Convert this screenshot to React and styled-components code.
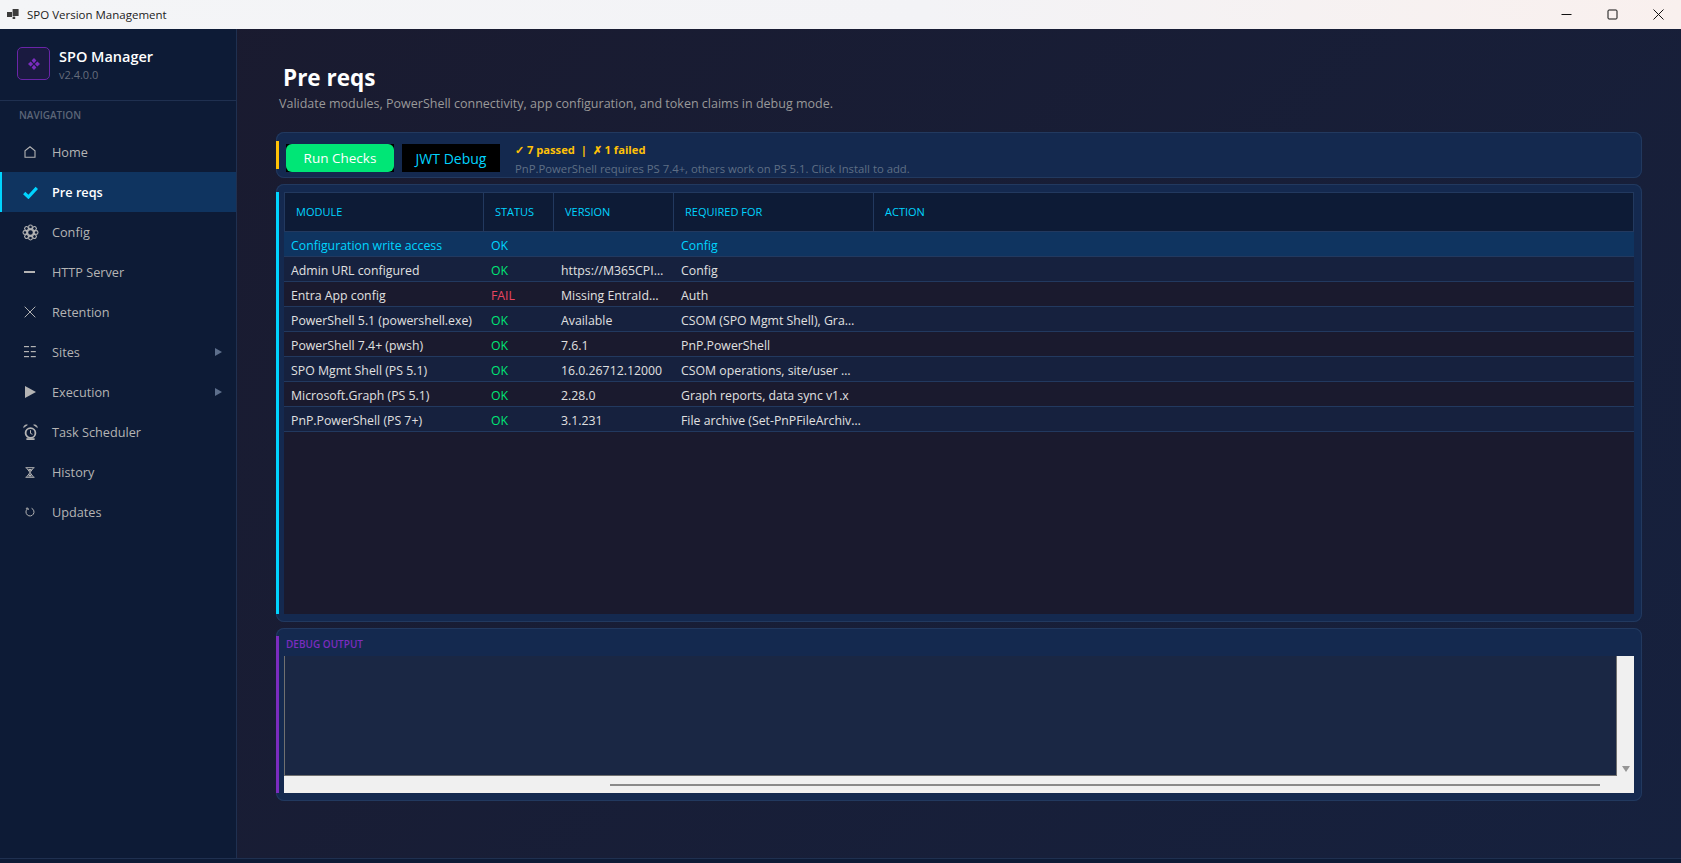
import React from 'react';
import styled, { createGlobalStyle } from 'styled-components';

const FONT = '"Open Sans", "Noto Sans", sans-serif';

const GlobalStyle = createGlobalStyle`
  html, body { margin: 0; padding: 0; height: 100%; overflow: hidden; }
  #root { height: 100%; }
  * { box-sizing: border-box; }
  body { font-family: ${FONT}; }
`;

const PETALS = [0, 45, 90, 135, 180, 225, 270, 315];

const Icons = {
  home: (
    <svg width="12" height="12" viewBox="0 0 12 12" fill="none" stroke="#b4b4b4" strokeWidth="1.1">
      <path d="M1 11.2V4.8L6 .8l5 4v6.4z" />
    </svg>
  ),
  check: (
    <svg width="15" height="13" viewBox="0 0 15 13" fill="none" stroke="#00d4ff" strokeWidth="3.2">
      <path d="M1.2 7l4.2 4L13.8 1.8" />
    </svg>
  ),
  gear: (
    <svg width="17" height="17" viewBox="0 0 17 17" fill="none" stroke="#b4b4b4" strokeWidth="1.1">
      {PETALS.map(a => (
        <circle key={a} cx="8.5" cy="2.9" r="1.9" transform={`rotate(${a} 8.5 8.5)`} />
      ))}
      <circle cx="8.5" cy="8.5" r="3" strokeWidth="1.4" />
    </svg>
  ),
  dash: (
    <svg width="12" height="4" viewBox="0 0 12 4" fill="#b4b4b4">
      <rect y="1" width="11" height="2" />
    </svg>
  ),
  cross: (
    <svg width="12" height="12" viewBox="0 0 12 12" stroke="#b4b4b4" strokeWidth="1">
      <path d="M.7.7l10.6 10.6M11.3.7L.7 11.3" />
    </svg>
  ),
  trigram: (
    <svg width="12" height="12" viewBox="0 0 12 12" fill="#b4b4b4">
      <rect y="0" width="5" height="1.2" />
      <rect x="6.8" y="0" width="5" height="1.2" />
      <rect y="5" width="5" height="1.2" />
      <rect x="6.8" y="5" width="5" height="1.2" />
      <rect y="10" width="5" height="1.2" />
      <rect x="6.8" y="10" width="5" height="1.2" />
    </svg>
  ),
  play: (
    <svg width="11" height="12" viewBox="0 0 11 12" fill="#b4b4b4">
      <path d="M0 0L11 6 0 12z" />
    </svg>
  ),
  alarm: (
    <svg width="15" height="17" viewBox="0 0 15 17" fill="none" stroke="#b4b4b4">
      <circle cx="7.5" cy="9" r="4.9" strokeWidth="1.8" />
      <path d="M7.5 6.2v3.2l2 .9" strokeWidth="1" />
      <path d="M.6 3.6C.8 1.6 2.4.4 4.4.9zM14.4 3.6C14.2 1.6 12.6.4 10.6.9z" fill="#b4b4b4" strokeWidth=".6" />
      <path d="M3.4 14.2h8.2v1.8H3.4z" fill="#b4b4b4" stroke="none" />
    </svg>
  ),
  hourglass: (
    <svg width="10" height="11" viewBox="0 0 10 11" fill="none" stroke="#b4b4b4" strokeWidth="1">
      <path d="M0.5 0.7h9M0.5 10.3h9M1.6 1l6.8 9M8.4 1L1.6 10" />
      <path d="M3 2h4L5 4.6z M3 9.4L5 6.8l2 2.6z" fill="#b4b4b4" stroke="none" />
    </svg>
  ),
  refresh: (
    <svg width="10" height="10" viewBox="0 0 10 10" fill="none" stroke="#b4b4b4" strokeWidth="1">
      <path d="M6.6 1.3A4 4 0 1 1 2.4 1.9" />
      <path d="M0.9 1.4l2 -0.4 .4 2" />
    </svg>
  ),
};

const NAV = [
  { label: 'Home', icon: 'home' },
  { label: 'Pre reqs', icon: 'check', active: true },
  { label: 'Config', icon: 'gear' },
  { label: 'HTTP Server', icon: 'dash' },
  { label: 'Retention', icon: 'cross' },
  { label: 'Sites', icon: 'trigram', sub: true },
  { label: 'Execution', icon: 'play', sub: true },
  { label: 'Task Scheduler', icon: 'alarm' },
  { label: 'History', icon: 'hourglass' },
  { label: 'Updates', icon: 'refresh' },
];

const ROWS = [
  ['Configuration write access', 'OK', '', 'Config'],
  ['Admin URL configured', 'OK', 'https://M365CPI…', 'Config'],
  ['Entra App config', 'FAIL', 'Missing EntraId…', 'Auth'],
  ['PowerShell 5.1 (powershell.exe)', 'OK', 'Available', 'CSOM (SPO Mgmt Shell), Gra…'],
  ['PowerShell 7.4+ (pwsh)', 'OK', '7.6.1', 'PnP.PowerShell'],
  ['SPO Mgmt Shell (PS 5.1)', 'OK', '16.0.26712.12000', 'CSOM operations, site/user …'],
  ['Microsoft.Graph (PS 5.1)', 'OK', '2.28.0', 'Graph reports, data sync v1.x'],
  ['PnP.PowerShell (PS 7+)', 'OK', '3.1.231', 'File archive (Set-PnPFileArchiv…'],
];

const COLUMNS = ['Module', 'Status', 'Version', 'Required for', 'Action'];

export default function App() {
  return (
    <Window>
      <GlobalStyle />
      <TitleBar>
        <WindowIcon viewBox="0 0 12 11" fill="#3c3c3c">
          <rect x="0" y="3" width="5" height="5" />
          <rect x="5.6" y="0" width="6" height="7" />
          <rect x="5.6" y="7.6" width="2.6" height="2.4" />
        </WindowIcon>
        <WindowTitle>SPO Version Management</WindowTitle>
        <WindowControls>
          <WindowButton>
            <svg width="11" height="11" viewBox="0 0 11 11" stroke="#111" strokeWidth="1"><path d="M0.5 5.5h10" /></svg>
          </WindowButton>
          <WindowButton>
            <svg width="11" height="11" viewBox="0 0 11 11" fill="none" stroke="#111" strokeWidth="1"><rect x="1" y="1" width="9" height="9" rx="1" /></svg>
          </WindowButton>
          <WindowButton>
            <svg width="11" height="11" viewBox="0 0 11 11" stroke="#111" strokeWidth="1"><path d="M0.5 0.5l10 10M10.5 0.5l-10 10" /></svg>
          </WindowButton>
        </WindowControls>
      </TitleBar>

      <Body>
        <Sidebar>
          <Brand>
            <LogoBox>
              <svg width="12" height="12" viewBox="0 0 12 12" fill="#7b2cbf">
                <path d="M6 0l2.4 2.6L6 5.2 3.6 2.6zM2.6 3.6L5.2 6 2.6 8.4 0 6zM9.4 3.6L12 6 9.4 8.4 6.8 6zM6 6.8l2.4 2.6L6 12 3.6 9.4z" />
              </svg>
            </LogoBox>
            <BrandText>
              <BrandName>SPO Manager</BrandName>
              <BrandVersion>v2.4.0.0</BrandVersion>
            </BrandText>
          </Brand>
          <NavHeading>NAVIGATION</NavHeading>
          <NavList>
            {NAV.map(item => (
              <NavItem key={item.label} $active={item.active}>
                <NavIcon>{Icons[item.icon]}</NavIcon>
                <NavLabel $active={item.active}>{item.label}</NavLabel>
                {item.sub && <NavCaret />}
              </NavItem>
            ))}
          </NavList>
        </Sidebar>

        <Main>
          <PageTitle>Pre reqs</PageTitle>
          <PageSubtitle>Validate modules, PowerShell connectivity, app configuration, and token claims in debug mode.</PageSubtitle>

          <ToolbarCard>
            <Accent $color="#ffc107" />
            <RunButtonWrap><RunButton>Run Checks</RunButton></RunButtonWrap>
            <DebugButton>JWT Debug</DebugButton>
            <StatusBlock>
              <StatusLine>✓ 7 passed&nbsp; |&nbsp; ✗ 1 failed</StatusLine>
              <HintLine>PnP.PowerShell requires PS 7.4+, others work on PS 5.1. Click Install to add.</HintLine>
            </StatusBlock>
          </ToolbarCard>

          <TableCard>
            <Accent $color="#00d4ff" />
            <Grid>
              <HeaderRow>
                {COLUMNS.map(col => <HeaderCell key={col}>{col}</HeaderCell>)}
              </HeaderRow>
              {ROWS.map((row, i) => (
                <Row key={row[0]} $selected={i === 0} $odd={i % 2 === 1}>
                  <ModuleCell>{row[0]}</ModuleCell>
                  <Status $fail={row[1] === 'FAIL'} $selected={i === 0}>{row[1]}</Status>
                  <Cell>{row[2]}</Cell>
                  <Cell>{row[3]}</Cell>
                </Row>
              ))}
            </Grid>
          </TableCard>

          <DebugCard>
            <Accent $color="#7b2cbf" />
            <DebugInner>
              <DebugHeading>DEBUG OUTPUT</DebugHeading>
              <OutputFrame>
                <OutputText />
                <VerticalBar>
                  <DownArrow />
                </VerticalBar>
                <HorizontalBar>
                  <HorizontalThumb />
                </HorizontalBar>
                <BarCorner />
              </OutputFrame>
            </DebugInner>
          </DebugCard>
        </Main>
      </Body>
      <Footer />
    </Window>
  );
}

const Window = styled.div`
  display: flex;
  flex-direction: column;
  height: 100vh;
  background: #1a1a2e;
`;

const TitleBar = styled.div`
  flex: 0 0 29px;
  display: flex;
  align-items: center;
  padding-left: 7px;
  background: linear-gradient(90deg, #f4f5f7, #f3f3f6 55%, #f9f0ee);
`;

const WindowIcon = styled.svg`
  width: 12px;
  height: 11px;
  margin-right: 8px;
`;

const WindowTitle = styled.span`
  font-size: 11.5px;
  color: #1c1c1c;
`;

const WindowControls = styled.div`
  margin-left: auto;
  display: flex;
`;

const WindowButton = styled.div`
  width: 46px;
  height: 29px;
  display: flex;
  align-items: center;
  justify-content: center;
`;

const Body = styled.div`
  flex: 1;
  min-height: 0;
  display: flex;
  background: linear-gradient(135deg, #1a1a2e, #16213e);
`;

const Sidebar = styled.aside`
  flex: 0 0 237px;
  display: flex;
  flex-direction: column;
  background: #0d1b36;
  border-right: 1px solid #1f3050;
`;

const Brand = styled.div`
  height: 72px;
  display: flex;
  align-items: flex-start;
  gap: 9px;
  padding: 18px 0 0 17px;
  border-bottom: 1px solid #1f3050;
`;

const LogoBox = styled.div`
  width: 33px;
  height: 33px;
  display: flex;
  align-items: center;
  justify-content: center;
  border: 1px solid #6a25a8;
  border-radius: 5px;
  background: #1a1a40;
`;

const BrandText = styled.div`
  display: flex;
  flex-direction: column;
`;

const BrandName = styled.div`
  font-size: 14.5px;
  font-weight: 600;
  line-height: 20px;
  color: #fff;
`;

const BrandVersion = styled.div`
  font-size: 11px;
  line-height: 16px;
  color: #666d7c;
`;

const NavHeading = styled.div`
  padding: 8px 0 0 19px;
  height: 30px;
  font-size: 10px;
  font-weight: 600;
  line-height: 13px;
  color: #5c6678;
`;

const NavList = styled.nav`
  display: flex;
  flex-direction: column;
  margin-top: 1px;
`;

const NavItem = styled.div`
  height: 40px;
  display: flex;
  align-items: center;
  padding-right: 14px;
  background: ${props => props.$active ? '#0f3460' : 'transparent'};
  box-shadow: ${props => props.$active ? 'inset 2px 0 0 #00d4ff' : 'none'};
  color: ${props => props.$active ? '#fff' : '#b4b4b4'};
`;

const NavIcon = styled.span`
  width: 52px;
  padding: 0 8px 0 16px;
  display: flex;
  align-items: center;
  justify-content: center;
`;

const NavLabel = styled.span`
  flex: 1;
  font-size: 12.7px;
  font-weight: ${props => props.$active ? 600 : 500};
`;

const NavCaret = styled.span`
  width: 0;
  height: 0;
  border-left: 7px solid #5d6f8c;
  border-top: 4px solid transparent;
  border-bottom: 4px solid transparent;
`;

const Main = styled.main`
  flex: 1;
  min-width: 0;
  display: flex;
  flex-direction: column;
  padding: 34px 39px 57px 39px;
`;

const PageTitle = styled.h1`
  margin: 0 0 3px 7px;
  font-size: 22.5px;
  font-weight: 700;
  line-height: 29px;
  color: #fff;
`;

const PageSubtitle = styled.p`
  margin: 0 0 19px 3px;
  font-size: 12.5px;
  line-height: 18px;
  color: #999;
`;

const Card = styled.section`
  display: flex;
  border-radius: 8px;
  background: #14294f;
  box-shadow: inset 0 0 0 1px #22395f;
`;

const Accent = styled.div`
  flex: 0 0 3px;
  background: ${props => props.$color};
`;

const ToolbarCard = styled(Card)`
  flex: 0 0 46px;
  min-height: 0;
  padding: 9px 0;
  align-items: stretch;
  margin-bottom: 6px;
`;

const RunButtonWrap = styled.div`
  width: 108px;
  height: 28px;
  margin: 3px 8px 0 7px;
  background: #000;
`;

const RunButton = styled.button`
  display: block;
  width: 100%;
  height: 100%;
  padding: 0;
  border: none;
  border-radius: 6px;
  background: #00e676;
  color: #fff;
  font-family: ${FONT};
  font-size: 13.5px;
  font-weight: 500;
`;

const DebugButton = styled.button`
  width: 98px;
  height: 28px;
  margin: 3px 15px 0 0;
  padding: 0;
  border: none;
  background: #000;
  color: #00d4ff;
  font-family: ${FONT};
  font-size: 14px;
  font-weight: 500;
`;

const StatusBlock = styled.div`
  display: flex;
  flex-direction: column;
  gap: 4px;
  padding-top: 1px;
`;

const StatusLine = styled.div`
  font-size: 11.2px;
  font-weight: 700;
  line-height: 16px;
  color: #ffc107;
`;

const HintLine = styled.div`
  font-size: 11.3px;
  line-height: 14px;
  color: #5f6f85;
`;

const TableCard = styled(Card)`
  flex: 1;
  min-height: 0;
  padding: 8px 8px 8px 0;
  gap: 5px;
  margin-bottom: 6px;
`;

const Grid = styled.div`
  flex: 1;
  display: flex;
  flex-direction: column;
  background: #1a1a2e;
`;

const COLS = '199px 70px 120px 200px 1fr';

const HeaderRow = styled.div`
  flex: 0 0 40px;
  display: grid;
  grid-template-columns: ${COLS};
  background: #0d1b36;
  border: 1px solid #22395f;
`;

const HeaderCell = styled.div`
  display: flex;
  align-items: center;
  padding: 0 0 2px 11px;
  border-right: 1px solid #22395f;
  font-size: 11px;
  font-weight: 500;
  text-transform: uppercase;
  color: #00d4ff;
  &:last-child { border-right: none; }
`;

const Row = styled.div`
  flex: 0 0 25px;
  display: grid;
  grid-template-columns: ${COLS};
  align-items: center;
  border-bottom: 1px solid #22395f;
  background: ${props => props.$selected ? '#0f3460' : props.$odd ? '#16213e' : '#1a1a2e'};
  color: ${props => props.$selected ? '#00d4ff' : '#e0e0e0'};
`;

const Cell = styled.div`
  padding: 2px 0 0 8px;
  font-size: 12.3px;
  white-space: nowrap;
  overflow: hidden;
`;

const ModuleCell = styled(Cell)`
  padding-left: 7px;
`;

const Status = styled(Cell)`
  color: ${props => props.$fail ? '#e94560' : props.$selected ? '#00d4ff' : '#00e676'};
`;

const DebugCard = styled(Card)`
  flex: 0 0 173px;
  padding: 8px 8px 8px 0;
  gap: 5px;
`;

const DebugInner = styled.div`
  flex: 1;
  min-width: 0;
  display: flex;
  flex-direction: column;
`;

const DebugHeading = styled.div`
  flex: 0 0 20px;
  padding-left: 2px;
  font-size: 10px;
  font-weight: 600;
  line-height: 16px;
  color: #7b2cbf;
`;

const OutputFrame = styled.div`
  flex: 1;
  display: grid;
  grid-template-columns: 1fr 17px;
  grid-template-rows: 1fr 17px;
`;

const OutputText = styled.div`
  background: #1a2744;
  border-left: 1px solid #707070;
  border-bottom: 1px solid #707070;
  border-right: 1px solid #707070;
`;

const VerticalBar = styled.div`
  display: flex;
  align-items: flex-end;
  justify-content: center;
  padding-bottom: 4px;
  background: #f0f0f0;
`;

const DownArrow = styled.span`
  width: 0;
  height: 0;
  border-top: 6px solid #969696;
  border-left: 4px solid transparent;
  border-right: 4px solid transparent;
`;

const HorizontalBar = styled.div`
  display: flex;
  align-items: center;
  justify-content: flex-end;
  padding-right: 17px;
  background: #f0f0f0;
`;

const HorizontalThumb = styled.span`
  width: 990px;
  height: 2px;
  background: #8a8a8a;
`;

const BarCorner = styled.div`
  background: #f0f0f0;
`;

const Footer = styled.div`
  flex: 0 0 5px;
  background: #0d1b36;
  border-top: 1px solid #1f3050;
`;
